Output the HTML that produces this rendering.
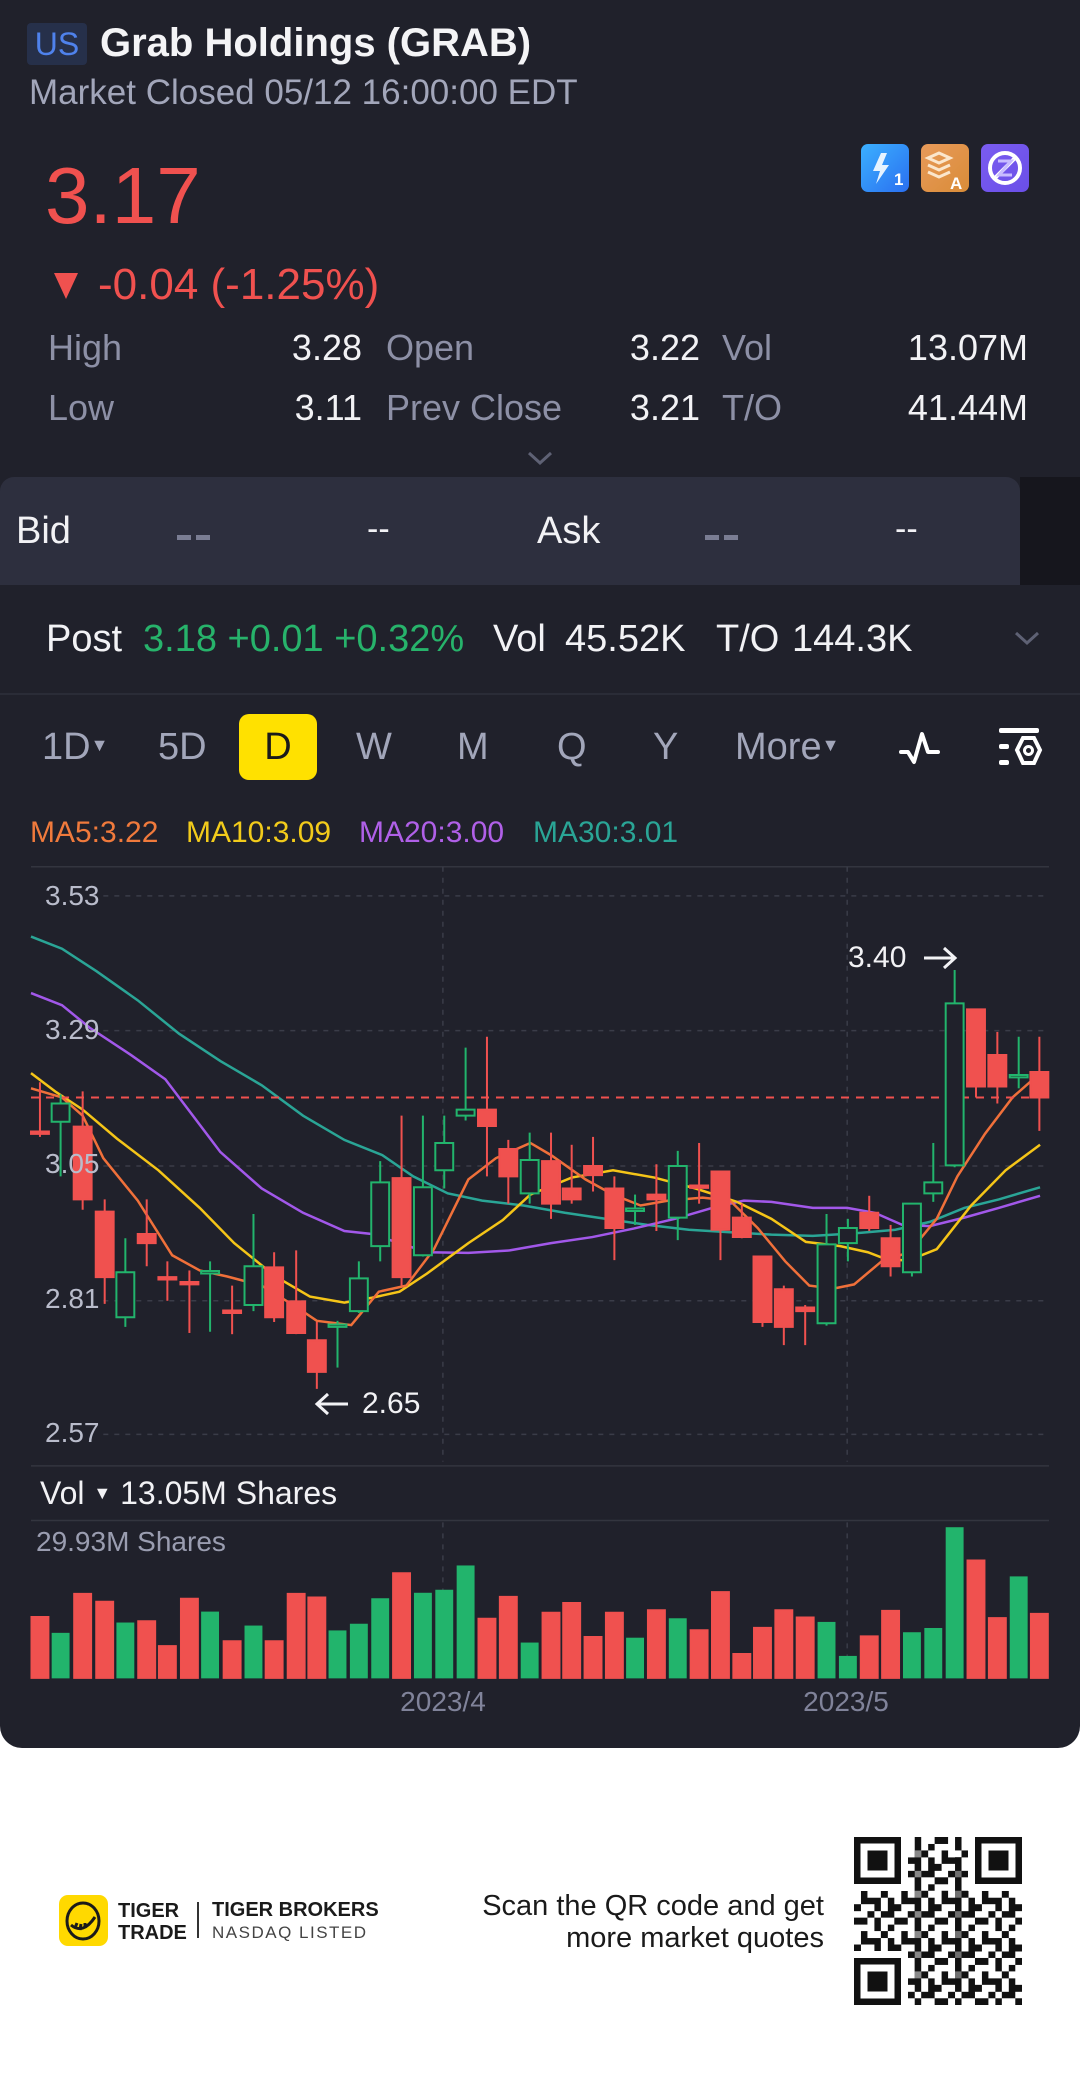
<!DOCTYPE html>
<html><head><meta charset="utf-8">
<style>
*{margin:0;padding:0;box-sizing:border-box}
body{width:1080px;height:2093px;background:#fff;font-family:"Liberation Sans",sans-serif;position:relative;overflow:hidden}
.dark{position:absolute;left:0;top:0;width:1080px;height:1748px;background:#20212b;border-radius:0 0 22px 22px}
.t{position:absolute;white-space:nowrap;line-height:1}
.lab{color:#8d90a6}
.val{color:#f2f2f5}
.r{fill:#f0514f;stroke:#f0514f}
.g{fill:#20212b;stroke:#22b46c}
.gv{fill:#22b46c}
svg line,svg rect,svg polyline{vector-effect:non-scaling-stroke}
</style></head><body>
<div class="dark"></div>

<div class="t" style="left:27px;top:23px;width:60px;height:42px;background:#26304a;border-radius:4px;color:#4f82ec;font-size:32px;line-height:42px;text-align:center">US</div>
<div class="t" style="left:100px;top:23px;color:#f4f4f6;font-size:40px;font-weight:bold">Grab Holdings (GRAB)</div>
<div class="t lab" style="left:29px;top:75px;font-size:35px;color:#a2a6ba">Market Closed 05/12 16:00:00 EDT</div>

<div class="t" style="left:45px;top:156px;color:#f0514f;font-size:80px">3.17</div>

<svg style="position:absolute;left:861px;top:144px" width="170" height="48">
<defs><linearGradient id="b1" x1="0" y1="0" x2="1" y2="1"><stop offset="0" stop-color="#3bb0ff"/><stop offset="1" stop-color="#2a6ff0"/></linearGradient>
<linearGradient id="b2" x1="0" y1="0" x2="1" y2="1"><stop offset="0" stop-color="#e89a5a"/><stop offset="1" stop-color="#d98c38"/></linearGradient>
<linearGradient id="b3" x1="0" y1="0" x2="1" y2="1"><stop offset="0" stop-color="#7a5cf0"/><stop offset="1" stop-color="#6a4fe8"/></linearGradient></defs>
<rect x="0" y="0" width="48" height="48" rx="7" fill="url(#b1)"/>
<path d="M20 9 L12 27 L19 27 L15 40 L28 21 L21 21 L26 9Z" fill="#e6f3ff"/>
<text x="33" y="41" font-size="17" font-weight="bold" fill="#fff" font-family="Liberation Sans">1</text>
<rect x="60" y="0" width="48" height="48" rx="7" fill="url(#b2)"/>
<path d="M67 14 L78 9 L89 14 L78 19Z M67 21 L78 26 L89 21 M67 28 L78 33 L89 28" fill="none" stroke="#fbe6cc" stroke-width="3"/>
<text x="89" y="45" font-size="17" font-weight="bold" fill="#fff" font-family="Liberation Sans">A</text>
<rect x="120" y="0" width="48" height="48" rx="7" fill="url(#b3)"/>
<circle cx="144" cy="24" r="15" fill="none" stroke="#fff" stroke-width="4"/>
<path d="M134 34 L154 14" stroke="#fff" stroke-width="4"/>
<path d="M137 17 H150 L138 31 H151" fill="none" stroke="#c8bcff" stroke-width="3"/>
</svg>

<svg style="position:absolute;left:53px;top:271px" width="26" height="30"><path d="M1 2 H25 L13 28Z" fill="#f0514f"/></svg>
<div class="t" style="left:98px;top:263px;color:#f0514f;font-size:44px">-0.04 (-1.25%)</div>

<div class="t lab" style="left:48px;top:330px;font-size:36px">High</div>
<div class="t val" style="right:718px;top:330px;font-size:36px">3.28</div>
<div class="t lab" style="left:386px;top:330px;font-size:36px">Open</div>
<div class="t val" style="right:380px;top:330px;font-size:36px">3.22</div>
<div class="t lab" style="left:722px;top:330px;font-size:36px">Vol</div>
<div class="t val" style="right:52px;top:330px;font-size:36px">13.07M</div>
<div class="t lab" style="left:48px;top:390px;font-size:36px">Low</div>
<div class="t val" style="right:718px;top:390px;font-size:36px">3.11</div>
<div class="t lab" style="left:386px;top:390px;font-size:36px">Prev Close</div>
<div class="t val" style="right:380px;top:390px;font-size:36px">3.21</div>
<div class="t lab" style="left:722px;top:390px;font-size:36px">T/O</div>
<div class="t val" style="right:52px;top:390px;font-size:36px">41.44M</div>
<svg style="position:absolute;left:527px;top:450px" width="26" height="16"><path d="M2 3 L13 13 L24 3" fill="none" stroke="#5e6174" stroke-width="3"/></svg>

<div style="position:absolute;left:0;top:477px;width:1020px;height:108px;background:#2d2f3e;border-radius:14px 14px 0 0"></div>
<div style="position:absolute;left:1020px;top:477px;width:60px;height:108px;background:#16161d"></div>
<div class="t val" style="left:16px;top:512px;font-size:38px">Bid</div>
<div style="position:absolute;left:177px;top:535px;width:14px;height:5px;background:#7a7d93"></div>
<div style="position:absolute;left:196px;top:535px;width:14px;height:5px;background:#7a7d93"></div>
<div class="t val" style="left:367px;top:512px;font-size:34px">--</div>
<div class="t val" style="left:537px;top:512px;font-size:38px">Ask</div>
<div style="position:absolute;left:705px;top:535px;width:14px;height:5px;background:#7a7d93"></div>
<div style="position:absolute;left:724px;top:535px;width:14px;height:5px;background:#7a7d93"></div>
<div class="t val" style="left:895px;top:512px;font-size:34px">--</div>

<div class="t" style="left:46px;top:620px;font-size:38px;color:#f2f2f5">Post</div>
<div class="t" style="left:143px;top:620px;font-size:38px;color:#27b36b">3.18 +0.01 +0.32%</div>
<div class="t" style="left:493px;top:620px;font-size:38px;color:#f2f2f5">Vol</div>
<div class="t" style="left:565px;top:620px;font-size:38px;color:#f2f2f5">45.52K</div>
<div class="t" style="left:716px;top:620px;font-size:38px;color:#f2f2f5">T/O</div>
<div class="t" style="left:792px;top:620px;font-size:38px;color:#f2f2f5">144.3K</div>
<svg style="position:absolute;left:1014px;top:630px" width="26" height="16"><path d="M2 3 L13 13 L24 3" fill="none" stroke="#5e6174" stroke-width="3"/></svg>
<div style="position:absolute;left:0;top:693px;width:1080px;height:2px;background:#2a2c37"></div>

<div class="t lab" style="left:42px;top:728px;font-size:38px;color:#a2a6ba">1D<span style="font-size:18px;vertical-align:8px">▼</span></div>
<div class="t lab" style="left:158px;top:728px;font-size:38px;color:#a2a6ba">5D</div>
<div style="position:absolute;left:239px;top:714px;width:78px;height:66px;background:#ffe100;border-radius:10px"></div>
<div class="t" style="left:239px;top:728px;width:78px;text-align:center;font-size:38px;color:#1a1a1a">D</div>
<div class="t lab" style="left:356px;top:728px;font-size:38px;color:#a2a6ba">W</div>
<div class="t lab" style="left:457px;top:728px;font-size:38px;color:#a2a6ba">M</div>
<div class="t lab" style="left:557px;top:728px;font-size:38px;color:#a2a6ba">Q</div>
<div class="t lab" style="left:653px;top:728px;font-size:38px;color:#a2a6ba">Y</div>
<div class="t lab" style="left:735px;top:728px;font-size:38px;color:#a2a6ba">More<span style="font-size:18px;vertical-align:8px">▼</span></div>
<svg style="position:absolute;left:898px;top:728px" width="58" height="40"><path d="M3 24 H10 L16 34 L24 6 L30 24 H40" fill="none" stroke="#fff" stroke-width="4" stroke-linejoin="round" stroke-linecap="round"/></svg>
<svg style="position:absolute;left:996px;top:726px" width="50" height="48"><rect x="3" y="2" width="40" height="5" rx="2" fill="#fff"/><rect x="3" y="18" width="10" height="5" rx="2" fill="#fff"/><rect x="3" y="34" width="10" height="5" rx="2" fill="#fff"/><path d="M27 12 H38 L44 24 L38 37 H27 L21 24Z" fill="none" stroke="#fff" stroke-width="4"/><circle cx="32.5" cy="24.5" r="4" fill="none" stroke="#fff" stroke-width="3"/></svg>

<div class="t" style="left:30px;top:818px;font-size:30px;color:#f07a3c">MA5:3.22</div>
<div class="t" style="left:186px;top:818px;font-size:30px;color:#f2cb1b">MA10:3.09</div>
<div class="t" style="left:359px;top:818px;font-size:30px;color:#b060e8">MA20:3.00</div>
<div class="t" style="left:533px;top:818px;font-size:30px;color:#2aa596">MA30:3.01</div>

<svg style="position:absolute;left:0;top:800px" width="1080" height="950" viewBox="0 0 1568 1565" preserveAspectRatio="none">
<g stroke="#33353f" stroke-width="1.5">
<line x1="45" y1="110" x2="1523" y2="110"/>
<line x1="45" y1="1097" x2="1523" y2="1097"/>
<line x1="45" y1="1187" x2="1523" y2="1187"/>
</g>
<g stroke="#3a3c48" stroke-width="1.5" stroke-dasharray="5 6">
<line x1="150" y1="158" x2="1523" y2="158"/>
<line x1="150" y1="380" x2="1523" y2="380"/>
<line x1="150" y1="603" x2="1523" y2="603"/>
<line x1="150" y1="825" x2="1523" y2="825"/>
<line x1="150" y1="1045" x2="1523" y2="1045"/>
<line x1="643" y1="110" x2="643" y2="1090"/>
<line x1="1230" y1="110" x2="1230" y2="1090"/>
<line x1="643" y1="1190" x2="643" y2="1447"/>
<line x1="1230" y1="1190" x2="1230" y2="1447"/>
</g>
<polyline fill="none" stroke="#2aa596" stroke-width="2.5" points="45,225 90,245 140,282 200,330 260,385 320,430 380,470 440,520 500,560 555,585 600,620 650,648 700,660 760,668 820,680 880,690 940,700 1000,708 1060,712 1120,716 1180,718 1240,714 1300,708 1350,695 1400,672 1450,658 1510,638"/>
<polyline fill="none" stroke="#a258ea" stroke-width="2.5" points="45,318 90,338 130,375 190,420 240,460 280,520 320,580 380,640 440,680 500,710 540,715 580,730 620,745 680,746 740,742 800,730 860,720 920,706 980,690 1040,670 1080,660 1120,662 1180,672 1230,672 1270,680 1310,700 1350,702 1400,688 1450,672 1510,652"/>
<polyline fill="none" stroke="#f5c518" stroke-width="2.5" points="45,450 80,480 120,510 170,558 230,610 290,672 340,730 400,785 450,818 500,828 540,820 580,810 620,780 680,730 730,692 770,650 830,622 890,610 950,622 1010,640 1070,662 1120,690 1170,728 1220,735 1260,745 1290,758 1320,758 1360,740 1410,668 1460,610 1510,568"/>
<polyline fill="none" stroke="#f0703a" stroke-width="2.5" points="45,475 90,490 120,520 150,590 200,660 250,750 290,775 330,785 380,800 430,835 460,858 510,865 550,810 590,800 630,740 680,625 720,590 770,565 800,585 850,625 890,650 930,668 970,660 1020,655 1060,660 1100,705 1140,760 1175,800 1210,805 1240,798 1280,760 1320,745 1360,690 1390,620 1430,550 1470,490 1510,450"/>
<line x1="45" y1="490" x2="1523" y2="490" stroke="#f0514f" stroke-width="2" stroke-dasharray="8 7"/>
<g stroke-width="2">
<line class="r" x1="58" y1="465" x2="58" y2="555"/><rect class="r" x="45" y="546" width="26" height="4"/>
<line class="g" x1="88" y1="485" x2="88" y2="620"/><rect class="g" x="75" y="500" width="26" height="30"/>
<line class="r" x1="120" y1="480" x2="120" y2="675"/><rect class="r" x="107" y="538" width="26" height="120"/>
<line class="r" x1="152" y1="658" x2="152" y2="830"/><rect class="r" x="139" y="678" width="26" height="108"/>
<line class="g" x1="182" y1="722" x2="182" y2="868"/><rect class="g" x="169" y="778" width="26" height="74"/>
<line class="r" x1="213" y1="658" x2="213" y2="768"/><rect class="r" x="200" y="715" width="26" height="15"/>
<line class="r" x1="243" y1="760" x2="243" y2="825"/><rect class="r" x="230" y="786" width="26" height="4"/>
<line class="r" x1="275" y1="775" x2="275" y2="878"/><rect class="r" x="262" y="794" width="26" height="4"/>
<line class="g" x1="305" y1="760" x2="305" y2="876"/><rect class="g" x="292" y="776" width="26" height="4"/>
<line class="r" x1="337" y1="800" x2="337" y2="880"/><rect class="r" x="324" y="841" width="26" height="4"/>
<line class="g" x1="368" y1="682" x2="368" y2="842"/><rect class="g" x="355" y="768" width="26" height="64"/>
<line class="r" x1="398" y1="745" x2="398" y2="860"/><rect class="r" x="385" y="770" width="26" height="82"/>
<line class="r" x1="430" y1="742" x2="430" y2="880"/><rect class="r" x="417" y="826" width="26" height="52"/>
<line class="r" x1="460" y1="860" x2="460" y2="970"/><rect class="r" x="447" y="890" width="26" height="52"/>
<line class="g" x1="490" y1="858" x2="490" y2="935"/><rect class="g" x="477" y="864" width="26" height="4"/>
<line class="g" x1="521" y1="760" x2="521" y2="845"/><rect class="g" x="508" y="788" width="26" height="54"/>
<line class="g" x1="552" y1="595" x2="552" y2="760"/><rect class="g" x="539" y="630" width="26" height="105"/>
<line class="r" x1="583" y1="520" x2="583" y2="800"/><rect class="r" x="570" y="623" width="26" height="163"/>
<line class="g" x1="614" y1="520" x2="614" y2="752"/><rect class="g" x="601" y="638" width="26" height="112"/>
<line class="g" x1="645" y1="520" x2="645" y2="640"/><rect class="g" x="632" y="565" width="26" height="45"/>
<line class="g" x1="676" y1="408" x2="676" y2="528"/><rect class="g" x="663" y="510" width="26" height="10"/>
<line class="r" x1="707" y1="390" x2="707" y2="620"/><rect class="r" x="694" y="510" width="26" height="27"/>
<line class="r" x1="738" y1="560" x2="738" y2="665"/><rect class="r" x="725" y="575" width="26" height="45"/>
<line class="g" x1="769" y1="548" x2="769" y2="665"/><rect class="g" x="756" y="593" width="26" height="55"/>
<line class="r" x1="800" y1="548" x2="800" y2="690"/><rect class="r" x="787" y="595" width="26" height="70"/>
<line class="r" x1="830" y1="568" x2="830" y2="665"/><rect class="r" x="817" y="640" width="26" height="18"/>
<line class="r" x1="861" y1="555" x2="861" y2="645"/><rect class="r" x="848" y="603" width="26" height="15"/>
<line class="r" x1="892" y1="620" x2="892" y2="758"/><rect class="r" x="879" y="640" width="26" height="65"/>
<line class="g" x1="922" y1="650" x2="922" y2="700"/><rect class="g" x="909" y="673" width="26" height="4"/>
<line class="r" x1="953" y1="600" x2="953" y2="710"/><rect class="r" x="940" y="650" width="26" height="8"/>
<line class="g" x1="984" y1="578" x2="984" y2="725"/><rect class="g" x="971" y="603" width="26" height="85"/>
<line class="r" x1="1015" y1="565" x2="1015" y2="665"/><rect class="r" x="1002" y="635" width="26" height="4"/>
<line class="r" x1="1046" y1="612" x2="1046" y2="758"/><rect class="r" x="1033" y="612" width="26" height="96"/>
<line class="r" x1="1077" y1="665" x2="1077" y2="722"/><rect class="r" x="1064" y="688" width="26" height="32"/>
<line class="r" x1="1107" y1="752" x2="1107" y2="868"/><rect class="r" x="1094" y="752" width="26" height="108"/>
<line class="r" x1="1138" y1="800" x2="1138" y2="898"/><rect class="r" x="1125" y="806" width="26" height="62"/>
<line class="r" x1="1169" y1="832" x2="1169" y2="898"/><rect class="r" x="1156" y="836" width="26" height="6"/>
<line class="g" x1="1200" y1="682" x2="1200" y2="866"/><rect class="g" x="1187" y="732" width="26" height="130"/>
<line class="g" x1="1231" y1="690" x2="1231" y2="760"/><rect class="g" x="1218" y="705" width="26" height="25"/>
<line class="r" x1="1262" y1="652" x2="1262" y2="710"/><rect class="r" x="1249" y="680" width="26" height="25"/>
<line class="r" x1="1293" y1="700" x2="1293" y2="785"/><rect class="r" x="1280" y="722" width="26" height="46"/>
<line class="g" x1="1324" y1="665" x2="1324" y2="785"/><rect class="g" x="1311" y="665" width="26" height="113"/>
<line class="g" x1="1355" y1="565" x2="1355" y2="662"/><rect class="g" x="1342" y="630" width="26" height="18"/>
<line class="g" x1="1386" y1="280" x2="1386" y2="605"/><rect class="g" x="1373" y="335" width="26" height="267"/>
<line class="r" x1="1417" y1="345" x2="1417" y2="490"/><rect class="r" x="1404" y="345" width="26" height="127"/>
<line class="r" x1="1448" y1="382" x2="1448" y2="500"/><rect class="r" x="1435" y="420" width="26" height="52"/>
<line class="g" x1="1479" y1="390" x2="1479" y2="475"/><rect class="g" x="1466" y="453" width="26" height="4"/>
<line class="r" x1="1509" y1="390" x2="1509" y2="545"/><rect class="r" x="1496" y="448" width="26" height="42"/>
</g>
<g>
<rect class="r" x="45" y="1345" width="26" height="102"/><rect class="gv" x="75" y="1372" width="26" height="75"/><rect class="r" x="107" y="1307" width="26" height="140"/><rect class="r" x="139" y="1320" width="26" height="127"/><rect class="gv" x="169" y="1355" width="26" height="92"/><rect class="r" x="200" y="1352" width="26" height="95"/><rect class="r" x="230" y="1393" width="26" height="54"/><rect class="r" x="262" y="1315" width="26" height="132"/><rect class="gv" x="292" y="1337" width="26" height="110"/><rect class="r" x="324" y="1385" width="26" height="62"/><rect class="gv" x="355" y="1360" width="26" height="87"/><rect class="r" x="385" y="1385" width="26" height="62"/><rect class="r" x="417" y="1307" width="26" height="140"/><rect class="r" x="447" y="1313" width="26" height="134"/><rect class="gv" x="477" y="1368" width="26" height="79"/><rect class="gv" x="508" y="1357" width="26" height="90"/><rect class="gv" x="539" y="1315" width="26" height="132"/><rect class="r" x="570" y="1273" width="26" height="174"/><rect class="gv" x="601" y="1306" width="26" height="141"/><rect class="gv" x="632" y="1301" width="26" height="146"/><rect class="gv" x="663" y="1261" width="26" height="186"/><rect class="r" x="694" y="1348" width="26" height="99"/><rect class="r" x="725" y="1312" width="26" height="135"/><rect class="gv" x="756" y="1388" width="26" height="59"/><rect class="r" x="787" y="1338" width="26" height="109"/><rect class="r" x="817" y="1322" width="26" height="125"/><rect class="r" x="848" y="1378" width="26" height="69"/><rect class="r" x="879" y="1338" width="26" height="109"/><rect class="gv" x="909" y="1380" width="26" height="67"/><rect class="r" x="940" y="1334" width="26" height="113"/><rect class="gv" x="971" y="1348" width="26" height="99"/><rect class="r" x="1002" y="1367" width="26" height="80"/><rect class="r" x="1033" y="1304" width="26" height="143"/><rect class="r" x="1064" y="1406" width="26" height="41"/><rect class="r" x="1094" y="1363" width="26" height="84"/><rect class="r" x="1125" y="1334" width="26" height="113"/><rect class="r" x="1156" y="1346" width="26" height="101"/><rect class="gv" x="1187" y="1354" width="26" height="93"/><rect class="gv" x="1218" y="1410" width="26" height="37"/><rect class="r" x="1249" y="1377" width="26" height="70"/><rect class="r" x="1280" y="1335" width="26" height="112"/><rect class="gv" x="1311" y="1371" width="26" height="76"/><rect class="gv" x="1342" y="1364" width="26" height="83"/><rect class="gv" x="1373" y="1198" width="26" height="249"/><rect class="r" x="1404" y="1252" width="26" height="195"/><rect class="r" x="1435" y="1347" width="26" height="100"/><rect class="gv" x="1466" y="1279" width="26" height="168"/><rect class="r" x="1496" y="1340" width="26" height="107"/>
</g>
</svg>

<div class="t" style="left:45px;top:882px;font-size:28px;color:#b9bccb">3.53</div>
<div class="t" style="left:45px;top:1016px;font-size:28px;color:#b9bccb">3.29</div>
<div class="t" style="left:45px;top:1150px;font-size:28px;color:#b9bccb">3.05</div>
<div class="t" style="left:45px;top:1285px;font-size:28px;color:#b9bccb">2.81</div>
<div class="t" style="left:45px;top:1419px;font-size:28px;color:#b9bccb">2.57</div>
<div class="t" style="left:848px;top:943px;font-size:30px;color:#f2f2f5">3.40</div>
<svg style="position:absolute;left:922px;top:945px" width="36" height="26"><path d="M2 13 H32 M22 3 L33 13 L22 23" fill="none" stroke="#f2f2f5" stroke-width="3"/></svg>
<svg style="position:absolute;left:314px;top:1391px" width="36" height="26"><path d="M34 13 H4 M14 3 L3 13 L14 23" fill="none" stroke="#f2f2f5" stroke-width="3"/></svg>
<div class="t" style="left:362px;top:1389px;font-size:30px;color:#f2f2f5">2.65</div>

<div class="t" style="left:40px;top:1477px;font-size:32px;color:#f2f2f5">Vol <span style="font-size:18px;vertical-align:5px">▼</span> 13.05M Shares</div>
<div class="t" style="left:36px;top:1528px;font-size:28px;color:#9a9db0">29.93M Shares</div>
<div class="t" style="left:443px;top:1688px;font-size:28px;color:#80839a;transform:translateX(-50%)">2023/4</div>
<div class="t" style="left:846px;top:1688px;font-size:28px;color:#80839a;transform:translateX(-50%)">2023/5</div>

<svg style="position:absolute;left:59px;top:1895px" width="50" height="52"><rect x="0" y="0" width="49" height="51" rx="9" fill="#ffd900"/><ellipse cx="24" cy="26" rx="16" ry="18" fill="none" stroke="#1a1a1a" stroke-width="3"/><path d="M12 30 Q24 40 36 22 M16 33 L18 28 M21 35 L22 29 M26 33 L26 28" fill="none" stroke="#1a1a1a" stroke-width="3"/></svg>
<div class="t" style="left:118px;top:1900px;font-size:20px;font-weight:bold;color:#1a1a1a;line-height:22px">TIGER<br>TRADE</div>
<div style="position:absolute;left:197px;top:1902px;width:2px;height:36px;background:#333"></div>
<div class="t" style="left:212px;top:1900px;font-size:20px;font-weight:bold;color:#1a1a1a">TIGER BROKERS</div>
<div class="t" style="left:212px;top:1924px;font-size:17px;color:#444;letter-spacing:1.5px">NASDAQ LISTED</div>
<div class="t" style="right:256px;top:1890px;font-size:29px;color:#1a1a1a;text-align:right;line-height:32px">Scan the QR code and get<br>more market quotes</div>

<svg style="position:absolute;left:854px;top:1837px" width="168" height="168" viewBox="0 0 25 25" shape-rendering="crispEdges">
<defs><pattern id="qp" width="6" height="6" patternUnits="userSpaceOnUse"><path d="M0 0h2v1H0z M3 0h1v2H3z M5 1h1v1H5z M1 2h1v2H1z M2 3h2v1H2z M4 2h1v1H4z M0 4h1v1H0z M5 3h1v2H5z M2 5h1v1H2z M4 5h2v1H4z M3 4h1v1H3z" fill="#111"/></pattern></defs>
<rect width="25" height="25" fill="#fff"/>
<rect width="25" height="25" fill="url(#qp)"/>
<rect x="9" y="2" width="1" height="20" fill="#111" opacity="0.5"/>
<rect x="15" y="3" width="1" height="19" fill="#111" opacity="0.6"/>
<g fill="#fff"><rect x="0" y="0" width="8" height="8"/><rect x="17" y="0" width="8" height="8"/><rect x="0" y="17" width="8" height="8"/></g>
<g fill="#111"><rect x="0" y="0" width="7" height="7"/><rect x="18" y="0" width="7" height="7"/><rect x="0" y="18" width="7" height="7"/></g>
<g fill="#fff"><rect x="1" y="1" width="5" height="5"/><rect x="19" y="1" width="5" height="5"/><rect x="1" y="19" width="5" height="5"/></g>
<g fill="#111"><rect x="2" y="2" width="3" height="3"/><rect x="20" y="2" width="3" height="3"/><rect x="2" y="20" width="3" height="3"/></g>
</svg>
</body></html>
